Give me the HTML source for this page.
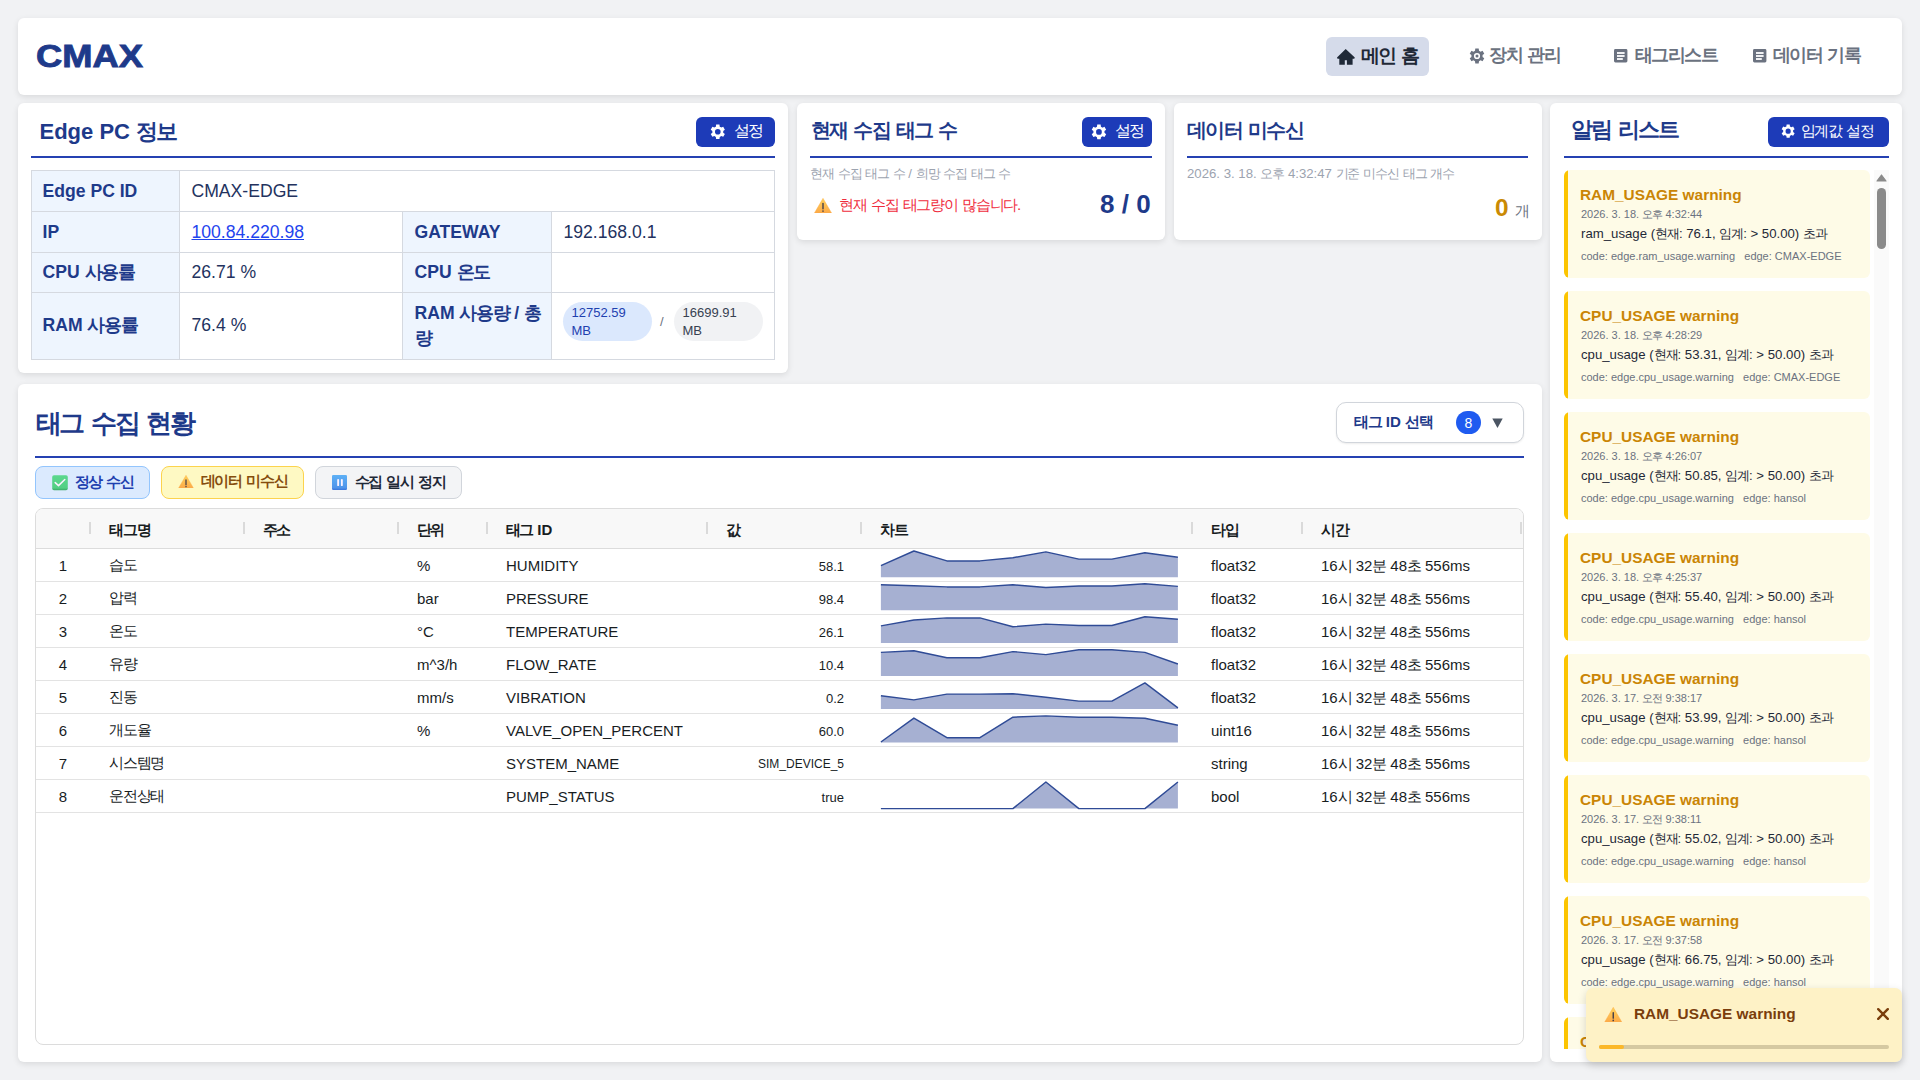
<!DOCTYPE html><html lang="ko"><head><meta charset="utf-8"><title>CMAX</title><style>
*{box-sizing:border-box;margin:0;padding:0}
html,body{width:1920px;height:1080px;overflow:hidden}
body{background:#f1f2f4;font-family:"Liberation Sans",sans-serif;color:#1f2937;position:relative}
.a{position:absolute}
.k{letter-spacing:-.08em}
.card{position:absolute;background:#fff;border-radius:6px;box-shadow:0 2px 6px rgba(0,0,0,.1)}
.t{position:absolute;white-space:nowrap;line-height:1}
.navy{color:#1e3a8a}
.b{font-weight:700}
.uline{position:absolute;height:2px;background:#2541b2}
.btn{position:absolute;background:#1d3bb8;border-radius:6px;height:30px;top:117px}
.hl{position:absolute;height:1px;background:#d5d9e0}
.vl{position:absolute;width:1px;background:#d5d9e0}
.lbg{position:absolute;background:#eef5fe}
.et{font-size:17.6px}
.pill{position:absolute;border-radius:20px;font-size:13px;line-height:17.5px;padding:2px 8.5px}
.item{position:absolute;left:1564px;width:306px;height:108px;background:#fefbe7;border-radius:6px;overflow:hidden}
.item:before{content:"";position:absolute;left:0;top:0;bottom:0;width:4px;background:#fcc400}
.it1{position:absolute;left:16px;top:16.5px;font-size:15.4px;font-weight:700;color:#ca8505;white-space:nowrap;line-height:1}
.it2{position:absolute;left:17px;top:39px;font-size:11px;color:#6b7280;white-space:nowrap;line-height:1}
.it3{position:absolute;left:17px;top:57px;font-size:13.2px;color:#1f2937;white-space:nowrap;line-height:1}
.it4{position:absolute;left:17px;top:80.5px;font-size:11px;color:#6b7280;white-space:nowrap;line-height:1}
.fb{position:absolute;top:466px;height:33px;border-radius:8px;border:1px solid}
.gh{position:absolute;top:0;font-size:15px;font-weight:700;color:#181d1f;white-space:nowrap;line-height:1}
.sep{position:absolute;top:522px;width:2px;height:12px;background:#dadada}
.row{position:absolute;left:36px;width:1487px;height:33px;border-bottom:1px solid #e3e3e3}
.c{position:absolute;top:9px;font-size:15px;color:#181d1f;white-space:nowrap;line-height:1}
</style></head><body>
<div class="card" style="left:18px;top:18px;width:1884px;height:77px"></div>
<div class="t navy b" style="left:35.8px;top:39.5px;font-size:32px;-webkit-text-stroke:.9px #1e3a8a;transform:scaleX(1.135);transform-origin:0 0">CMAX</div>
<div class="a" style="left:1326px;top:37px;width:103px;height:39px;background:#d5dbea;border-radius:6px"></div>
<svg class="a" style="left:1337px;top:48px" width="19" height="18" viewBox="0 0 19 18"><path d="M8.7 1 L17.8 9.5 L17.3 10.7 L15.6 10.7 L15.6 16.8 L9.9 16.8 L9.9 12.3 L7.8 12.3 L7.8 16.8 L2.3 16.8 L2.3 10.7 L0.5 10.7 L0 9.5 Z" fill="#1f2937"/></svg>
<div class="t b" style="left:1361px;top:45.5px;font-size:19.2px;color:#1f2937"><span class="k">메인</span> <span class="k">홈</span></div>
<svg class="a" style="left:1468.5px;top:47.5px" width="16" height="16" viewBox="0 0 16 16" fill="#6b7280"><path fill-rule="evenodd" d="M5.99 2.77 L6.29 0.59 L9.71 0.59 L10.01 2.77 L10.41 2.95 L10.80 3.15 L11.17 3.38 L11.52 3.65 L13.56 2.82 L15.27 5.78 L13.53 7.12 L13.58 7.56 L13.60 8.00 L13.58 8.44 L13.53 8.88 L15.27 10.22 L13.56 13.18 L11.52 12.35 L11.17 12.62 L10.80 12.85 L10.41 13.05 L10.01 13.23 L9.71 15.41 L6.29 15.41 L5.99 13.23 L5.59 13.05 L5.20 12.85 L4.83 12.62 L4.48 12.35 L2.44 13.18 L0.73 10.22 L2.47 8.88 L2.42 8.44 L2.40 8.00 L2.42 7.56 L2.47 7.12 L0.73 5.78 L2.44 2.82 L4.48 3.65 L4.83 3.38 L5.20 3.15 L5.59 2.95ZM8 4.9a3.1 3.1 0 1 0 0 6.2a3.1 3.1 0 1 0 0 -6.2ZM8 6.5a1.5 1.5 0 1 0 0 3.0a1.5 1.5 0 1 0 0 -3.0Z"/></svg>
<div class="t b" style="left:1489px;top:46px;font-size:18px;color:#6b7280"><span class="k">장치</span> <span class="k">관리</span></div>
<svg class="a" style="left:1614px;top:49px" width="14" height="14" viewBox="0 0 14 14"><rect x="0" y="0" width="13.4" height="13.4" rx="1.4" fill="#6b7280"/><rect x="3" y="3.1" width="7.6" height="1.8" fill="#fff"/><rect x="3" y="6.1" width="7.6" height="1.8" fill="#fff"/><rect x="3" y="9.1" width="5.8" height="1.8" fill="#fff"/></svg>
<div class="t b" style="left:1634.5px;top:46px;font-size:18px;color:#6b7280"><span class="k">태그리스트</span></div>
<svg class="a" style="left:1753px;top:49px" width="14" height="14" viewBox="0 0 14 14"><rect x="0" y="0" width="13.4" height="13.4" rx="1.4" fill="#6b7280"/><rect x="3" y="3.1" width="7.6" height="1.8" fill="#fff"/><rect x="3" y="6.1" width="7.6" height="1.8" fill="#fff"/><rect x="3" y="9.1" width="5.8" height="1.8" fill="#fff"/></svg>
<div class="t b" style="left:1772.5px;top:46px;font-size:18px;color:#6b7280"><span class="k">데이터</span> <span class="k">기록</span></div>
<div class="card" style="left:18px;top:103px;width:770px;height:270px"></div>
<div class="t navy b" style="left:39.5px;top:121px;font-size:22px">Edge PC <span class="k">정보</span></div>
<div class="btn" style="left:696px;width:79px"></div>
<svg class="a" style="left:709.9px;top:124.3px" width="15.6" height="15.6" viewBox="0 0 16 16" fill="#fff"><path fill-rule="evenodd" d="M5.99 2.77 L6.29 0.59 L9.71 0.59 L10.01 2.77 L10.41 2.95 L10.80 3.15 L11.17 3.38 L11.52 3.65 L13.56 2.82 L15.27 5.78 L13.53 7.12 L13.58 7.56 L13.60 8.00 L13.58 8.44 L13.53 8.88 L15.27 10.22 L13.56 13.18 L11.52 12.35 L11.17 12.62 L10.80 12.85 L10.41 13.05 L10.01 13.23 L9.71 15.41 L6.29 15.41 L5.99 13.23 L5.59 13.05 L5.20 12.85 L4.83 12.62 L4.48 12.35 L2.44 13.18 L0.73 10.22 L2.47 8.88 L2.42 8.44 L2.40 8.00 L2.42 7.56 L2.47 7.12 L0.73 5.78 L2.44 2.82 L4.48 3.65 L4.83 3.38 L5.20 3.15 L5.59 2.95ZM8 5.1a2.9 2.9 0 1 0 0 5.8a2.9 2.9 0 1 0 0 -5.8Z"/></svg>
<div class="t" style="left:733.5px;top:123px;font-size:16px;color:#fff"><span class="k">설정</span></div>
<div class="uline" style="left:31px;top:155.5px;width:744px"></div>
<div class="lbg" style="left:32px;top:171px;width:147px;height:188px"></div>
<div class="lbg" style="left:403px;top:212px;width:148px;height:147px"></div>
<div class="hl" style="left:31px;top:170px;width:744px"></div>
<div class="hl" style="left:31px;top:211px;width:744px"></div>
<div class="hl" style="left:31px;top:252px;width:744px"></div>
<div class="hl" style="left:31px;top:292px;width:744px"></div>
<div class="hl" style="left:31px;top:359px;width:744px"></div>
<div class="vl" style="left:31px;top:170px;height:190px"></div>
<div class="vl" style="left:179px;top:170px;height:190px"></div>
<div class="vl" style="left:402px;top:211px;height:149px"></div>
<div class="vl" style="left:551px;top:211px;height:149px"></div>
<div class="vl" style="left:774px;top:170px;height:190px"></div>
<div class="t b navy et" style="left:42.5px;top:182.5px;">Edge PC ID</div>
<div class="t et" style="left:191.5px;top:182.5px;color:#23325e;">CMAX-EDGE</div>
<div class="t b navy et" style="left:42.5px;top:223.5px;">IP</div>
<div class="t et" style="left:191.5px;top:223.5px;color:#23325e;color:#1f45ee;text-decoration:underline;text-underline-offset:1px">100.84.220.98</div>
<div class="t b navy et" style="left:414.5px;top:223.5px;">GATEWAY</div>
<div class="t et" style="left:563.5px;top:223.5px;color:#23325e;">192.168.0.1</div>
<div class="t b navy et" style="left:42.5px;top:264px;">CPU <span class="k">사용률</span></div>
<div class="t et" style="left:191.5px;top:264px;color:#23325e;">26.71 %</div>
<div class="t b navy et" style="left:414.5px;top:264px;">CPU <span class="k">온도</span></div>
<div class="t b navy et" style="left:42.5px;top:317px;">RAM <span class="k">사용률</span></div>
<div class="t et" style="left:191.5px;top:317px;color:#23325e;">76.4 %</div>
<div class="a b navy et" style="left:414.5px;top:301px;width:130px;line-height:25px">RAM <span class="k">사용량</span> / <span class="k">총</span> <span class="k">량</span></div>
<div class="pill" style="left:563px;top:302px;width:89px;height:39px;background:#dbe8fd;color:#1e40af">12752.59 MB</div>
<div class="t" style="left:660px;top:315px;font-size:13px;color:#6b7280">/</div>
<div class="pill" style="left:674px;top:302px;width:89px;height:39px;background:#f1f2f4;color:#374151">16699.91 MB</div>
<div class="card" style="left:797px;top:103px;width:368px;height:137px"></div>
<div class="t navy b" style="left:811px;top:120.5px;font-size:19.6px"><span class="k">현재</span> <span class="k">수집</span> <span class="k">태그</span> <span class="k">수</span></div>
<div class="btn" style="left:1082px;width:70px"></div>
<svg class="a" style="left:1090.8px;top:124px" width="15.9" height="15.9" viewBox="0 0 16 16" fill="#fff"><path fill-rule="evenodd" d="M5.99 2.77 L6.29 0.59 L9.71 0.59 L10.01 2.77 L10.41 2.95 L10.80 3.15 L11.17 3.38 L11.52 3.65 L13.56 2.82 L15.27 5.78 L13.53 7.12 L13.58 7.56 L13.60 8.00 L13.58 8.44 L13.53 8.88 L15.27 10.22 L13.56 13.18 L11.52 12.35 L11.17 12.62 L10.80 12.85 L10.41 13.05 L10.01 13.23 L9.71 15.41 L6.29 15.41 L5.99 13.23 L5.59 13.05 L5.20 12.85 L4.83 12.62 L4.48 12.35 L2.44 13.18 L0.73 10.22 L2.47 8.88 L2.42 8.44 L2.40 8.00 L2.42 7.56 L2.47 7.12 L0.73 5.78 L2.44 2.82 L4.48 3.65 L4.83 3.38 L5.20 3.15 L5.59 2.95ZM8 5.1a2.9 2.9 0 1 0 0 5.8a2.9 2.9 0 1 0 0 -5.8Z"/></svg>
<div class="t" style="left:1114.5px;top:123px;font-size:16px;color:#fff"><span class="k">설정</span></div>
<div class="uline" style="left:810px;top:155.5px;width:342px"></div>
<div class="t" style="left:810px;top:167px;font-size:13.2px;color:#9ca3af"><span class="k">현재</span> <span class="k">수집</span> <span class="k">태그</span> <span class="k">수</span> / <span class="k">희망</span> <span class="k">수집</span> <span class="k">태그</span> <span class="k">수</span></div>
<svg class="a" style="left:813.5px;top:197.5px" width="18" height="15.5" viewBox="0 0 20 17.2"><defs><linearGradient id="wg" x1="0" y1="0" x2="0" y2="1"><stop offset="0" stop-color="#ffd35a"/><stop offset="1" stop-color="#fca848"/></linearGradient></defs><path d="M10 0.4 L19.7 17 L0.3 17 Z" fill="url(#wg)" stroke="#fcae48" stroke-width=".5" stroke-linejoin="round"/><rect x="9.25" y="5.4" width="1.5" height="7.4" rx=".75" fill="#3d3a48"/><ellipse cx="10" cy="14.5" rx=".85" ry="1" fill="#3d3a48"/></svg>
<div class="t" style="left:839px;top:196.5px;font-size:15.3px;color:#ef2d3d"><span class="k">현재</span> <span class="k">수집</span> <span class="k">태그량이</span> <span class="k">많습니다</span>.</div>
<div class="t navy b" style="left:1100px;top:191px;font-size:26px">8 / 0</div>
<div class="card" style="left:1174px;top:103px;width:368px;height:137px"></div>
<div class="t navy b" style="left:1187px;top:120.5px;font-size:19.6px"><span class="k">데이터</span> <span class="k">미수신</span></div>
<div class="uline" style="left:1187px;top:155.5px;width:341px"></div>
<div class="t" style="left:1187px;top:167px;font-size:13.2px;color:#9ca3af">2026. 3. 18. <span class="k">오후</span> 4:32:47 <span class="k">기준</span> <span class="k">미수신</span> <span class="k">태그</span> <span class="k">개수</span></div>
<div class="t b" style="left:1495px;top:195.5px;font-size:24.4px;color:#ca8a04">0</div>
<div class="t" style="left:1514.5px;top:203px;font-size:15px;color:#6b7280"><span class="k">개</span></div>
<div class="card" style="left:1550px;top:103px;width:352px;height:959px"></div>
<div class="t navy b" style="left:1571px;top:119px;font-size:22px"><span class="k">알림</span> <span class="k">리스트</span></div>
<div class="btn" style="left:1768px;width:121px"></div>
<svg class="a" style="left:1781.25px;top:124.4px" width="14.3" height="14.3" viewBox="0 0 16 16" fill="#fff"><path fill-rule="evenodd" d="M5.99 2.77 L6.29 0.59 L9.71 0.59 L10.01 2.77 L10.41 2.95 L10.80 3.15 L11.17 3.38 L11.52 3.65 L13.56 2.82 L15.27 5.78 L13.53 7.12 L13.58 7.56 L13.60 8.00 L13.58 8.44 L13.53 8.88 L15.27 10.22 L13.56 13.18 L11.52 12.35 L11.17 12.62 L10.80 12.85 L10.41 13.05 L10.01 13.23 L9.71 15.41 L6.29 15.41 L5.99 13.23 L5.59 13.05 L5.20 12.85 L4.83 12.62 L4.48 12.35 L2.44 13.18 L0.73 10.22 L2.47 8.88 L2.42 8.44 L2.40 8.00 L2.42 7.56 L2.47 7.12 L0.73 5.78 L2.44 2.82 L4.48 3.65 L4.83 3.38 L5.20 3.15 L5.59 2.95ZM8 5.1a2.9 2.9 0 1 0 0 5.8a2.9 2.9 0 1 0 0 -5.8Z"/></svg>
<div class="t" style="left:1800.5px;top:123px;font-size:15.2px;color:#fff"><span class="k">임계값</span> <span class="k">설정</span></div>
<div class="uline" style="left:1564px;top:155.5px;width:325px"></div>
<div class="a" style="left:1550px;top:170px;width:352px;height:879px;overflow:hidden">
<div class="item" style="left:14px;top:0px"><div class="it1">RAM_USAGE warning</div><div class="it2">2026. 3. 18. <span class="k">오후</span> 4:32:44</div><div class="it3">ram_usage (<span class="k">현재</span>: 76.1, <span class="k">임계</span>: &gt; 50.00) <span class="k">초과</span></div><div class="it4">code: edge.ram_usage.warning &nbsp; edge: CMAX-EDGE</div></div>
<div class="item" style="left:14px;top:121px"><div class="it1">CPU_USAGE warning</div><div class="it2">2026. 3. 18. <span class="k">오후</span> 4:28:29</div><div class="it3">cpu_usage (<span class="k">현재</span>: 53.31, <span class="k">임계</span>: &gt; 50.00) <span class="k">초과</span></div><div class="it4">code: edge.cpu_usage.warning &nbsp; edge: CMAX-EDGE</div></div>
<div class="item" style="left:14px;top:242px"><div class="it1">CPU_USAGE warning</div><div class="it2">2026. 3. 18. <span class="k">오후</span> 4:26:07</div><div class="it3">cpu_usage (<span class="k">현재</span>: 50.85, <span class="k">임계</span>: &gt; 50.00) <span class="k">초과</span></div><div class="it4">code: edge.cpu_usage.warning &nbsp; edge: hansol</div></div>
<div class="item" style="left:14px;top:363px"><div class="it1">CPU_USAGE warning</div><div class="it2">2026. 3. 18. <span class="k">오후</span> 4:25:37</div><div class="it3">cpu_usage (<span class="k">현재</span>: 55.40, <span class="k">임계</span>: &gt; 50.00) <span class="k">초과</span></div><div class="it4">code: edge.cpu_usage.warning &nbsp; edge: hansol</div></div>
<div class="item" style="left:14px;top:484px"><div class="it1">CPU_USAGE warning</div><div class="it2">2026. 3. 17. <span class="k">오전</span> 9:38:17</div><div class="it3">cpu_usage (<span class="k">현재</span>: 53.99, <span class="k">임계</span>: &gt; 50.00) <span class="k">초과</span></div><div class="it4">code: edge.cpu_usage.warning &nbsp; edge: hansol</div></div>
<div class="item" style="left:14px;top:605px"><div class="it1">CPU_USAGE warning</div><div class="it2">2026. 3. 17. <span class="k">오전</span> 9:38:11</div><div class="it3">cpu_usage (<span class="k">현재</span>: 55.02, <span class="k">임계</span>: &gt; 50.00) <span class="k">초과</span></div><div class="it4">code: edge.cpu_usage.warning &nbsp; edge: hansol</div></div>
<div class="item" style="left:14px;top:726px"><div class="it1">CPU_USAGE warning</div><div class="it2">2026. 3. 17. <span class="k">오전</span> 9:37:58</div><div class="it3">cpu_usage (<span class="k">현재</span>: 66.75, <span class="k">임계</span>: &gt; 50.00) <span class="k">초과</span></div><div class="it4">code: edge.cpu_usage.warning &nbsp; edge: hansol</div></div>
<div class="item" style="left:14px;top:847px"><div class="it1">CPU_USAGE warning</div><div class="it2">2026. 3. 17. <span class="k">오전</span> 9:37:40</div><div class="it3">cpu_usage (<span class="k">현재</span>: 58.12, <span class="k">임계</span>: &gt; 50.00) <span class="k">초과</span></div><div class="it4">code: edge.cpu_usage.warning &nbsp; edge: hansol</div></div>
</div>
<div class="a" style="left:1874px;top:170px;width:15px;height:879px;background:#fafafa"></div>
<svg class="a" style="left:1876px;top:174px" width="11" height="8" viewBox="0 0 11 8"><path d="M5.5 1 L10 7 L1 7 Z" fill="#8a8a8a" stroke="#8a8a8a" stroke-width="1.2" stroke-linejoin="round"/></svg>
<div class="a" style="left:1877px;top:188px;width:9px;height:61px;background:#8a8a8a;border-radius:5px"></div>
<div class="card" style="left:18px;top:384px;width:1524px;height:678px"></div>
<div class="t navy b" style="left:35.5px;top:410px;font-size:26.4px"><span class="k">태그</span> <span class="k">수집</span> <span class="k">현황</span></div>
<div class="a" style="left:1336px;top:402px;width:188px;height:41px;border:1px solid #d1d5db;border-radius:10px;background:#fff;box-shadow:0 1px 2px rgba(0,0,0,.08)"></div>
<div class="t navy b" style="left:1354px;top:413.5px;font-size:15.1px"><span class="k">태그</span> ID <span class="k">선택</span></div>
<div class="a" style="left:1456px;top:411px;width:25px;height:23px;border-radius:12px;background:#1f5bf0"></div>
<div class="t" style="left:1464.5px;top:416px;font-size:14px;color:#fff">8</div>
<svg class="a" style="left:1492px;top:417.5px" width="11" height="10" viewBox="0 0 11 10"><path d="M0.3 0.5 L10.7 0.5 L5.5 10 Z" fill="#4b5563"/></svg>
<div class="uline" style="left:35px;top:456px;width:1489px"></div>
<div class="fb" style="left:35px;width:115px;background:#dbeafe;border-color:#93c5fd"></div>
<svg class="a" style="left:52px;top:475px" width="16" height="16" viewBox="0 0 16 16"><defs><linearGradient id="cg" x1="0" y1="0" x2="0" y2="1"><stop offset="0" stop-color="#5bd88e"/><stop offset=".85" stop-color="#52cf84"/><stop offset="1" stop-color="#3aa866"/></linearGradient></defs><rect x="0.2" y="0.2" width="15.6" height="15" rx="1.8" fill="url(#cg)"/><path d="M3.2 7.6 L6.5 10.6 L12.8 4.5" fill="none" stroke="#fbf0ff" stroke-width="1.5" stroke-linecap="round" stroke-linejoin="round"/></svg>
<div class="t b" style="left:74.5px;top:474px;font-size:15px;color:#1e40af"><span class="k">정상</span> <span class="k">수신</span></div>
<div class="fb" style="left:161px;width:143px;background:#fef9c3;border-color:#fcd34d"></div>
<svg class="a" style="left:177.5px;top:474.5px" width="16" height="13.8" viewBox="0 0 20 17.2"><defs><linearGradient id="wg" x1="0" y1="0" x2="0" y2="1"><stop offset="0" stop-color="#ffd35a"/><stop offset="1" stop-color="#fca848"/></linearGradient></defs><path d="M10 0.4 L19.7 17 L0.3 17 Z" fill="url(#wg)" stroke="#fcae48" stroke-width=".5" stroke-linejoin="round"/><rect x="9.25" y="5.4" width="1.5" height="7.4" rx=".75" fill="#3d3a48"/><ellipse cx="10" cy="14.5" rx=".85" ry="1" fill="#3d3a48"/></svg>
<div class="t b" style="left:200.5px;top:474px;font-size:14.8px;color:#854d0e"><span class="k">데이터</span> <span class="k">미수신</span></div>
<div class="fb" style="left:315px;width:147px;background:#f3f4f6;border-color:#d1d5db"></div>
<svg class="a" style="left:332px;top:475px" width="15" height="15" viewBox="0 0 15 15"><defs><linearGradient id="pg" x1="0" y1="0" x2="0" y2="1"><stop offset="0" stop-color="#5db0f6"/><stop offset=".85" stop-color="#4f94ea"/><stop offset="1" stop-color="#3a74dc"/></linearGradient></defs><rect x="0" y="0" width="15" height="15" rx="1.3" fill="url(#pg)"/><rect x="5.2" y="3.9" width="1.9" height="7.2" rx=".9" fill="#fbf2ff"/><rect x="8.9" y="3.9" width="1.9" height="7.2" rx=".9" fill="#fbf2ff"/></svg>
<div class="t b" style="left:354.5px;top:474px;font-size:15px;color:#1f2937"><span class="k">수집</span> <span class="k">일시</span> <span class="k">정지</span></div>
<div class="a" style="left:35px;top:508px;width:1489px;height:537px;border:1px solid #dcdcdc;border-radius:8px;background:#fff;overflow:hidden">
<div class="a" style="left:0;top:0;width:1487px;height:40px;background:#f8f8f8;border-bottom:1px solid #dcdcdc"></div>
</div>
<div class="sep" style="left:89px"></div>
<div class="sep" style="left:242.5px"></div>
<div class="sep" style="left:397px"></div>
<div class="sep" style="left:485.5px"></div>
<div class="sep" style="left:705.5px"></div>
<div class="sep" style="left:860px"></div>
<div class="sep" style="left:1190.5px"></div>
<div class="sep" style="left:1300.5px"></div>
<div class="sep" style="left:1520px"></div>
<div class="gh" style="left:109px;top:522px"><span class="k">태그명</span></div>
<div class="gh" style="left:262.5px;top:522px"><span class="k">주소</span></div>
<div class="gh" style="left:416.5px;top:522px"><span class="k">단위</span></div>
<div class="gh" style="left:505.5px;top:522px"><span class="k">태그</span> ID</div>
<div class="gh" style="left:726px;top:522px"><span class="k">값</span></div>
<div class="gh" style="left:880px;top:522px"><span class="k">차트</span></div>
<div class="gh" style="left:1211px;top:522px"><span class="k">타입</span></div>
<div class="gh" style="left:1321px;top:522px"><span class="k">시간</span></div>
<div class="row" style="top:549px"><div class="c" style="left:0;width:54px;text-align:center">1</div><div class="c" style="left:73px;top:8px"><span class="k">습도</span></div><div class="c" style="left:381px">%</div><div class="c" style="left:470px">HUMIDITY</div><div class="c" style="left:670px;width:138px;text-align:right;font-size:13px;top:10.5px">58.1</div><div class="c" style="left:1175px">float32</div><div class="c" style="left:1285px">16<span class="k">시</span> 32<span class="k">분</span> 48<span class="k">초</span> 556ms</div></div>
<div class="row" style="top:582px"><div class="c" style="left:0;width:54px;text-align:center">2</div><div class="c" style="left:73px;top:8px"><span class="k">압력</span></div><div class="c" style="left:381px">bar</div><div class="c" style="left:470px">PRESSURE</div><div class="c" style="left:670px;width:138px;text-align:right;font-size:13px;top:10.5px">98.4</div><div class="c" style="left:1175px">float32</div><div class="c" style="left:1285px">16<span class="k">시</span> 32<span class="k">분</span> 48<span class="k">초</span> 556ms</div></div>
<div class="row" style="top:615px"><div class="c" style="left:0;width:54px;text-align:center">3</div><div class="c" style="left:73px;top:8px"><span class="k">온도</span></div><div class="c" style="left:381px">°C</div><div class="c" style="left:470px">TEMPERATURE</div><div class="c" style="left:670px;width:138px;text-align:right;font-size:13px;top:10.5px">26.1</div><div class="c" style="left:1175px">float32</div><div class="c" style="left:1285px">16<span class="k">시</span> 32<span class="k">분</span> 48<span class="k">초</span> 556ms</div></div>
<div class="row" style="top:648px"><div class="c" style="left:0;width:54px;text-align:center">4</div><div class="c" style="left:73px;top:8px"><span class="k">유량</span></div><div class="c" style="left:381px">m^3/h</div><div class="c" style="left:470px">FLOW_RATE</div><div class="c" style="left:670px;width:138px;text-align:right;font-size:13px;top:10.5px">10.4</div><div class="c" style="left:1175px">float32</div><div class="c" style="left:1285px">16<span class="k">시</span> 32<span class="k">분</span> 48<span class="k">초</span> 556ms</div></div>
<div class="row" style="top:681px"><div class="c" style="left:0;width:54px;text-align:center">5</div><div class="c" style="left:73px;top:8px"><span class="k">진동</span></div><div class="c" style="left:381px">mm/s</div><div class="c" style="left:470px">VIBRATION</div><div class="c" style="left:670px;width:138px;text-align:right;font-size:13px;top:10.5px">0.2</div><div class="c" style="left:1175px">float32</div><div class="c" style="left:1285px">16<span class="k">시</span> 32<span class="k">분</span> 48<span class="k">초</span> 556ms</div></div>
<div class="row" style="top:714px"><div class="c" style="left:0;width:54px;text-align:center">6</div><div class="c" style="left:73px;top:8px"><span class="k">개도율</span></div><div class="c" style="left:381px">%</div><div class="c" style="left:470px">VALVE_OPEN_PERCENT</div><div class="c" style="left:670px;width:138px;text-align:right;font-size:13px;top:10.5px">60.0</div><div class="c" style="left:1175px">uint16</div><div class="c" style="left:1285px">16<span class="k">시</span> 32<span class="k">분</span> 48<span class="k">초</span> 556ms</div></div>
<div class="row" style="top:747px"><div class="c" style="left:0;width:54px;text-align:center">7</div><div class="c" style="left:73px;top:8px"><span class="k">시스템명</span></div><div class="c" style="left:381px"></div><div class="c" style="left:470px">SYSTEM_NAME</div><div class="c" style="left:670px;width:138px;text-align:right;font-size:12px;top:10.5px">SIM_DEVICE_5</div><div class="c" style="left:1175px">string</div><div class="c" style="left:1285px">16<span class="k">시</span> 32<span class="k">분</span> 48<span class="k">초</span> 556ms</div></div>
<div class="row" style="top:780px"><div class="c" style="left:0;width:54px;text-align:center">8</div><div class="c" style="left:73px;top:8px"><span class="k">운전상태</span></div><div class="c" style="left:381px"></div><div class="c" style="left:470px">PUMP_STATUS</div><div class="c" style="left:670px;width:138px;text-align:right;font-size:13px;top:10.5px">true</div><div class="c" style="left:1175px">bool</div><div class="c" style="left:1285px">16<span class="k">시</span> 32<span class="k">분</span> 48<span class="k">초</span> 556ms</div></div>
<svg class="a" style="left:0;top:0" width="1920" height="1080" viewBox="0 0 1920 1080"><polygon points="880.9,577.2 880.9,565.7 913.9,551.0 946.9,560.9 979.9,560.9 1012.9,557.7 1045.9,551.9 1078.9,559.1 1111.9,559.1 1144.9,552.8 1177.9,557.2 1177.9,577.2" fill="#a6b0d2"/><polyline points="880.9,565.7 913.9,551.0 946.9,560.9 979.9,560.9 1012.9,557.7 1045.9,551.9 1078.9,559.1 1111.9,559.1 1144.9,552.8 1177.9,557.2" fill="none" stroke="#2f4b96" stroke-width="1.45" stroke-linejoin="round"/><polygon points="880.9,610.3 880.9,584.8 913.9,585.7 946.9,586.9 979.9,586.9 1012.9,584.8 1045.9,587.5 1078.9,586.0 1111.9,586.0 1144.9,583.7 1177.9,586.4 1177.9,610.3" fill="#a6b0d2"/><polyline points="880.9,584.8 913.9,585.7 946.9,586.9 979.9,586.9 1012.9,584.8 1045.9,587.5 1078.9,586.0 1111.9,586.0 1144.9,583.7 1177.9,586.4" fill="none" stroke="#2f4b96" stroke-width="1.45" stroke-linejoin="round"/><polygon points="880.9,643.1 880.9,625.9 913.9,620.0 946.9,617.9 979.9,617.9 1012.9,626.8 1045.9,624.1 1078.9,625.5 1111.9,625.5 1144.9,616.7 1177.9,619.2 1177.9,643.1" fill="#a6b0d2"/><polyline points="880.9,625.9 913.9,620.0 946.9,617.9 979.9,617.9 1012.9,626.8 1045.9,624.1 1078.9,625.5 1111.9,625.5 1144.9,616.7 1177.9,619.2" fill="none" stroke="#2f4b96" stroke-width="1.45" stroke-linejoin="round"/><polygon points="880.9,676.0 880.9,652.4 913.9,650.7 946.9,657.8 979.9,657.8 1012.9,651.6 1045.9,654.6 1078.9,649.8 1111.9,649.8 1144.9,652.4 1177.9,664.0 1177.9,676.0" fill="#a6b0d2"/><polyline points="880.9,652.4 913.9,650.7 946.9,657.8 979.9,657.8 1012.9,651.6 1045.9,654.6 1078.9,649.8 1111.9,649.8 1144.9,652.4 1177.9,664.0" fill="none" stroke="#2f4b96" stroke-width="1.45" stroke-linejoin="round"/><polygon points="880.9,709.1 880.9,695.8 913.9,699.9 946.9,694.1 979.9,694.1 1012.9,693.7 1045.9,697.2 1078.9,701.1 1111.9,701.1 1144.9,682.9 1177.9,707.9 1177.9,709.1" fill="#a6b0d2"/><polyline points="880.9,695.8 913.9,699.9 946.9,694.1 979.9,694.1 1012.9,693.7 1045.9,697.2 1078.9,701.1 1111.9,701.1 1144.9,682.9 1177.9,707.9" fill="none" stroke="#2f4b96" stroke-width="1.45" stroke-linejoin="round"/><polygon points="880.9,742.5 880.9,742.0 913.9,718.1 946.9,737.7 979.9,737.7 1012.9,717.2 1045.9,715.9 1078.9,717.2 1111.9,717.2 1144.9,718.2 1177.9,725.3 1177.9,742.5" fill="#a6b0d2"/><polyline points="880.9,742.0 913.9,718.1 946.9,737.7 979.9,737.7 1012.9,717.2 1045.9,715.9 1078.9,717.2 1111.9,717.2 1144.9,718.2 1177.9,725.3" fill="none" stroke="#2f4b96" stroke-width="1.45" stroke-linejoin="round"/><polygon points="880.9,808.6 880.9,808.6 913.9,808.6 946.9,808.6 979.9,808.6 1012.9,808.6 1045.9,782.0 1078.9,808.6 1111.9,808.6 1144.9,808.6 1177.9,782.0 1177.9,808.6" fill="#a6b0d2"/><polyline points="880.9,808.6 913.9,808.6 946.9,808.6 979.9,808.6 1012.9,808.6 1045.9,782.0 1078.9,808.6 1111.9,808.6 1144.9,808.6 1177.9,782.0" fill="none" stroke="#2f4b96" stroke-width="1.45" stroke-linejoin="round"/></svg>
<div class="a" style="left:1586px;top:988px;width:316px;height:74px;background:#fef2c6;border-radius:7px;box-shadow:0 3px 8px rgba(0,0,0,.16)"></div>
<svg class="a" style="left:1603.5px;top:1006.5px" width="18.5" height="15.9" viewBox="0 0 20 17.2"><defs><linearGradient id="wg" x1="0" y1="0" x2="0" y2="1"><stop offset="0" stop-color="#ffd35a"/><stop offset="1" stop-color="#fca848"/></linearGradient></defs><path d="M10 0.4 L19.7 17 L0.3 17 Z" fill="url(#wg)" stroke="#fcae48" stroke-width=".5" stroke-linejoin="round"/><rect x="9.25" y="5.4" width="1.5" height="7.4" rx=".75" fill="#3d3a48"/><ellipse cx="10" cy="14.5" rx=".85" ry="1" fill="#3d3a48"/></svg>
<div class="t b" style="left:1634px;top:1006px;font-size:15.4px;color:#7a3e0c">RAM_USAGE warning</div>
<svg class="a" style="left:1877px;top:1008px" width="12" height="12" viewBox="0 0 12 12"><path d="M1.2 1.2 L10.8 10.8 M10.8 1.2 L1.2 10.8" stroke="#7a3e0c" stroke-width="2.4" stroke-linecap="round"/></svg>
<div class="a" style="left:1599px;top:1045px;width:290px;height:4px;border-radius:2px;background:#d5c9a1"></div>
<div class="a" style="left:1599px;top:1045px;width:25px;height:4px;border-radius:2px;background:#fbb829"></div>
</body></html>
